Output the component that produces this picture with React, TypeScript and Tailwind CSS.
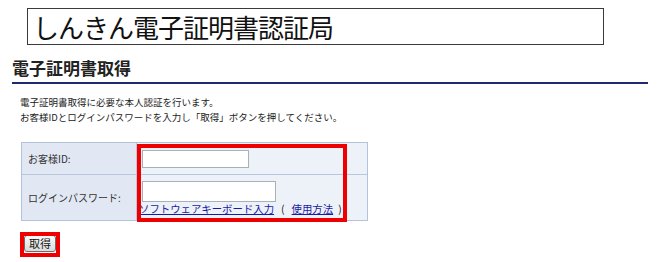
import React from "react";

export default function App() {
  const font = { fontFamily: '"Noto Sans CJK JP", "Noto Sans", sans-serif' };
  return (
    <div className="relative w-[664px] h-[262px] bg-white text-[#222] overflow-hidden" style={font}>
      <div className="pt-[8px] pl-[27px]">
        <div className="w-[577px] h-[37px] border border-[#3a3a3a] flex items-center pl-[5px] text-[26px] leading-none tracking-[-1px] text-[#111]">
          しんきん電子証明書認証局
        </div>
      </div>
      <div className="mt-[13px] pl-[12px] text-[17px] font-bold leading-[20px] text-[#222]">
        電子証明書取得
      </div>
      <div className="mt-[4px] ml-[12px] w-[636px] h-[2px] bg-[#1f2a6e]" />
      <div className="mt-[11px] pl-[20px] text-[9.5px] leading-[15px] text-[#222]">
        <div>電子証明書取得に必要な本人認証を行います。</div>
        <div>お客様IDとログインパスワードを入力し「取得」ボタンを押してください。</div>
      </div>
      <div className="mt-[17px] ml-[21px] w-[347px] border border-[#b3c2df] grid grid-cols-[115px_1fr] text-[10px]">
        <div className="h-[32px] bg-[#e2e8f3] border-r border-b border-[#b8c6e0] flex items-center pl-[6px] text-[#333]">
          お客様ID:
        </div>
        <div className="h-[32px] bg-[#edf1f8] border-b border-[#b8c6e0] flex items-center pl-[5px]">
          <div className="w-[107px] h-[18px] bg-white border border-[#a8b0bc]" />
        </div>
        <div className="h-[45px] bg-[#e2e8f3] border-r border-[#b8c6e0] flex items-center pl-[6px] text-[#333]">
          ログインパスワード:
        </div>
        <div className="h-[45px] bg-[#edf1f8] flex flex-col justify-center pl-[5px]">
          <div className="w-[134px] h-[21px] bg-white border border-[#a8b0bc]" />
          <div className="flex items-center leading-[13px] -ml-[3px] text-[10.4px]">
            <span className="text-[#1a1aa6] underline">ソフトウェアキーボード入力</span>
            <span className="mx-[7px] text-[#222]">(</span>
            <span className="text-[#1a1aa6] underline">使用方法</span>
            <span className="ml-[5px] text-[#222]">)</span>
          </div>
        </div>
      </div>
      <div className="mt-[14px] ml-[24px]">
        <button className="w-[32px] h-[17px] rounded-[3px] border border-[#6b6b6b] bg-gradient-to-b from-[#fafafa] to-[#dcdcdc] text-[11px] leading-none text-[#111] flex items-center justify-center">
          取得
        </button>
      </div>
      <div className="absolute left-[137px] top-[144px] w-[210px] h-[78px] border-[4px] border-[#ee0000]" />
      <div className="absolute left-[20px] top-[232px] w-[40px] h-[25px] border-[4px] border-[#ee0000]" />
    </div>
  );
}
